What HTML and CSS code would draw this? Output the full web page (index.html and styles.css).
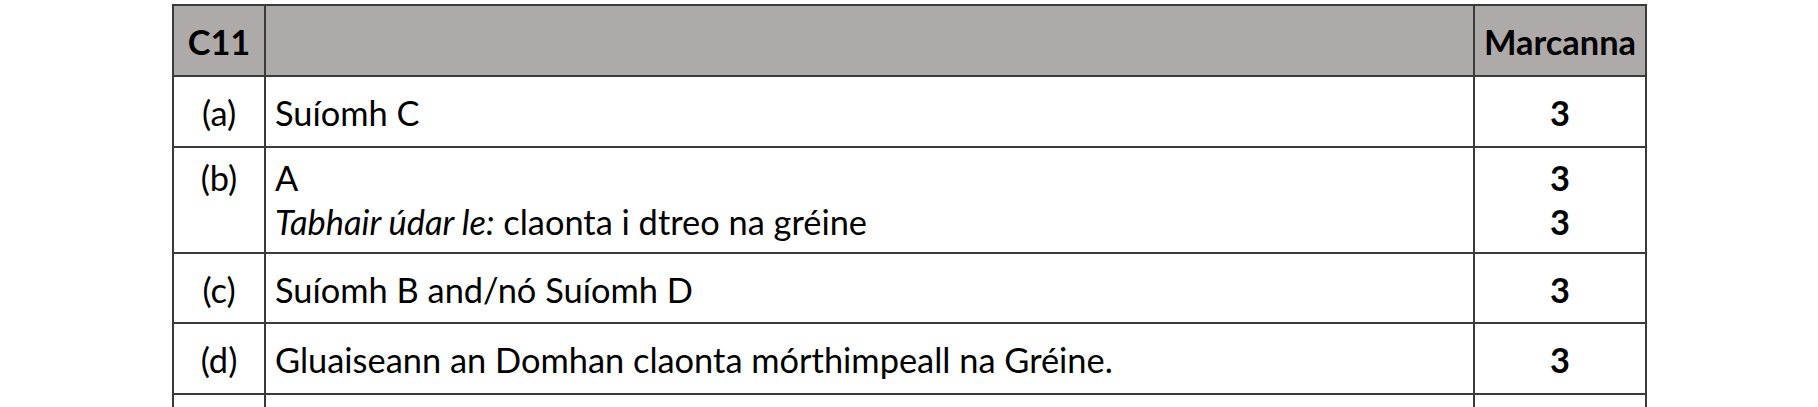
FILE: index.html
```html
<!DOCTYPE html>
<html lang="ga">
<head>
<meta charset="utf-8">
<title>C11</title>
<link rel="stylesheet" href="styles.css">
</head>
<body>
<div class="page">
  <table class="scheme">
    <colgroup>
      <col class="col-q">
      <col class="col-ans">
      <col class="col-mark">
    </colgroup>
    <thead>
      <tr class="head-row">
        <th class="q">C11</th>
        <th class="ans"></th>
        <th class="mark">Marcanna</th>
      </tr>
    </thead>
    <tbody>
      <tr class="row">
        <td class="q">(a)</td>
        <td class="ans">Suíomh C</td>
        <td class="mark">3</td>
      </tr>
      <tr class="row row-tall">
        <td class="q">(b)</td>
        <td class="ans">A<br><em>Tabhair údar le:</em> claonta i dtreo na gréine</td>
        <td class="mark">3<br>3</td>
      </tr>
      <tr class="row row-short">
        <td class="q">(c)</td>
        <td class="ans">Suíomh B and/nó Suíomh D</td>
        <td class="mark">3</td>
      </tr>
      <tr class="row">
        <td class="q">(d)</td>
        <td class="ans">Gluaiseann an Domhan claonta mórthimpeall na Gréine.</td>
        <td class="mark">3</td>
      </tr>
      <tr class="row">
        <td class="q"></td>
        <td class="ans"></td>
        <td class="mark"></td>
      </tr>
    </tbody>
  </table>
</div>
</body>
</html>
```
FILE: styles.css
```css
html, body {
  margin: 0;
  padding: 0;
  background: #ffffff;
  overflow: hidden;
}

.page {
  padding: 4px 0 0 172px;
  font-family: "Lato", "Liberation Sans", sans-serif;
  font-size: 34.4px;
  color: #000000;
}

.scheme {
  border-collapse: collapse;
  table-layout: fixed;
  width: 1475px;
}

.col-q { width: 92px; }
.col-mark { width: 172px; }

.scheme th,
.scheme td {
  border: 2px solid #3a3a3a;
  line-height: 44px;
  vertical-align: top;
  padding: 14px 0 0 0;
}

.head-row th {
  background: #aeaaaa;
  font-weight: 700;
  padding-top: 14px;
  height: 55px;
}

.row td {
  height: 55px;
}

.row-short td {
  height: 54px;
}

.row-tall td {
  line-height: 44px;
  padding-top: 8px;
  height: 96px;
}

.q { text-align: center; }
.ans { text-align: left; padding-left: 9px !important; }
.mark { text-align: center; font-weight: 700; }

.scheme em { font-style: italic; }
```
